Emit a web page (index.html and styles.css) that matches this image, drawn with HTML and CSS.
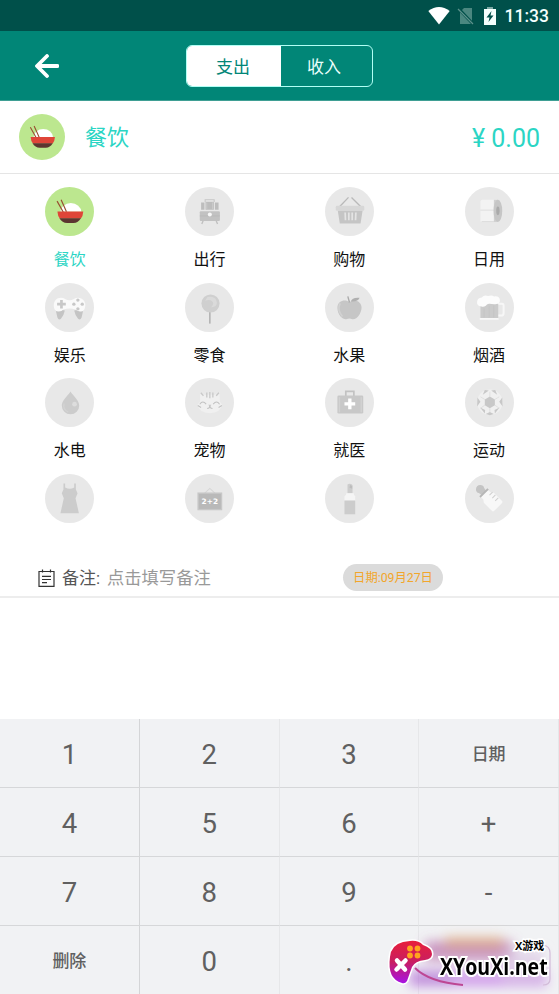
FILE: index.html
```html
<!DOCTYPE html>
<html lang="zh-CN">
<head>
<meta charset="utf-8">
<title>记账</title>
<link rel="stylesheet" href="styles.css">
</head>
<body>
<svg class="defs" aria-hidden="true">
  <symbol id="bowl" viewBox="0 0 146 146">
    <circle cx="73" cy="73" r="73" fill="#bce78f"/>
    <path d="M46 74a31 26 0 0 1 62 0z" fill="#fff"/>
    <path d="M36 42l19 34M48 38l16 36" stroke="#984f31" stroke-width="3.5" fill="none"/>
    <path d="M37 73h77q-1 14-7 21H44Q38 87 37 73z" fill="#df4538"/>
    <path d="M43 93h64q-8 14-22 14H66q-15 0-23-14z" fill="#5c3530"/>
  </symbol>
</svg>
<main class="screen">
  <div class="status">
    <svg class="wifi" viewBox="0 0 22 18"><path d="M.3 4Q11-4 21.7 4L11 17.5z" fill="#fff"/></svg>
    <svg class="sim" viewBox="0 0 18 18"><path d="M7 1h8v16H3V5z" fill="#4b8780"/><path d="M1 1l15 16" stroke="#00504a" stroke-width="3"/><path d="M1 2l15 15" stroke="#5c918b" stroke-width="1.3"/></svg>
    <svg class="battery" viewBox="0 0 12 18"><path d="M3.5 0h5v2H12v16H0V2h3.500z" fill="#f4fffd"/><path d="M3.500 0h5v2h-5z" fill="#7fa9a4"/><path d="M7.500 4L2.500 10.500h3L4.500 15l5-6.500h-3z" fill="#00504a"/></svg>
    <span class="clock">11:33</span>
  </div>
  <header class="header">
    <svg class="back" viewBox="0 0 24 24"><path d="M12 2L2 12l10 10M2.500 12h20" fill="none" stroke="#fff" stroke-width="3.800" stroke-linecap="round" stroke-linejoin="round"/></svg>
    <div class="tabs"><span class="tab active">支出</span><span class="tab">收入</span></div>
  </header>
  <section class="entry">
    <svg class="entry-icon"><use href="#bowl"/></svg>
    <span class="entry-name">餐饮</span>
    <span class="amount">¥ 0.00</span>
  </section>
  <section class="categories">
    <div class="cat selected"><svg><use href="#bowl"/></svg><span>餐饮</span></div>
    <div class="cat"><svg viewBox="0 0 146 146"><circle cx="73" cy="73" r="73" fill="#e8e8e8"/>
      <path d="M60 45v-7h27v7" fill="none" stroke="#c5c5c5" stroke-width="3"/><path d="M48 46h10v22H48zM61 44h25v24H61zM89 46h11v22H89z" fill="#bdbdbd"/><path d="M65 46v20M82 46v20" stroke="#d0d0d0" stroke-width="2"/><rect x="44" y="72" width="60" height="29" rx="3" fill="#c2c2c2"/><path d="M44 86h60" stroke="#b5b5b5" stroke-width="2"/><circle cx="74" cy="82" r="6" fill="#f7f7f7"/><path d="M54 101l-4 9M93 101l4 9" stroke="#c0c0c0" stroke-width="4"/></svg><span>出行</span></div>
    <div class="cat"><svg viewBox="0 0 146 146"><circle cx="73" cy="73" r="73" fill="#e8e8e8"/>
      <path d="M44 58l26-27M79 31l27 27" stroke="#b9b9b9" stroke-width="4"/><path d="M38 70h74l-6 39H44z" fill="#c5c5c5"/><rect x="32" y="56" width="85" height="15" rx="4" fill="#d7d7d7"/><path d="M60 76l1 23M71 76v23M81 76v23M92 76l-1 23" stroke="#e4e4e4" stroke-width="5"/></svg><span>购物</span></div>
    <div class="cat"><svg viewBox="0 0 146 146"><circle cx="73" cy="73" r="73" fill="#e8e8e8"/>
      <path d="M46 43q1-5 6-5h44v65H46z" fill="#f3f3f3"/><path d="M46 69h40M50 103h44" stroke="#dadada" stroke-width="2.500"/><path d="M86 38h12v66H86z" fill="#d0d0d0"/><ellipse cx="98" cy="71" rx="13" ry="33" fill="#c6c6c6"/><ellipse cx="98" cy="71" rx="5" ry="13" fill="#aaa"/></svg><span>日用</span></div>
    <div class="cat"><svg viewBox="0 0 146 146"><circle cx="73" cy="73" r="73" fill="#e8e8e8"/>
      <path d="M31 77l6 26q4 10 11 3 8-9 11-24zM115 77l-6 26q-4 10-11 3-8-9-11-24z" fill="#c4c4c4"/><path d="M60 48q13 7 26 0 10-7 22-2 13 7 12 22-1 19-16 17-9-1-13-6-18-6-36 0-5 6-14 6-15 0-15-18 0-14 11-21 13-5 23 2z" fill="#fafafa"/><path d="M49 51v25M36 63h26" stroke="#c8c8c8" stroke-width="8"/><g fill="#c8c8c8"><circle cx="98" cy="51" r="5"/><circle cx="86" cy="63" r="5"/><circle cx="111" cy="63" r="5"/><circle cx="98" cy="77" r="5"/></g></svg><span>娱乐</span></div>
    <div class="cat"><svg viewBox="0 0 146 146"><circle cx="73" cy="73" r="73" fill="#e8e8e8"/>
      <path d="M74 85v36" stroke="#b5b5b5" stroke-width="5"/><circle cx="76" cy="61" r="27" fill="#cfcfcf"/><path d="M67 42q26-5 28 17-1 14-17 13 11-11 2-18-7-6-20-1z" fill="#dadada"/></svg><span>零食</span></div>
    <div class="cat"><svg viewBox="0 0 146 146"><circle cx="73" cy="73" r="73" fill="#e8e8e8"/>
      <path d="M73 57C60 47 37 53 37 74c0 22 16 35 26 34 7-2 11-3 18 0 15 2 27-17 28-34 0-20-22-28-36-17z" fill="#c6c6c6"/><path d="M45 61Q35 80 52 100" stroke="#d2d2d2" stroke-width="5" fill="none"/><path d="M73 58l-5-18" stroke="#aaa" stroke-width="4"/><path d="M77 55q3-13 26-11-5 13-26 11z" fill="#b0b0b0"/></svg><span>水果</span></div>
    <div class="cat"><svg viewBox="0 0 146 146"><circle cx="73" cy="73" r="73" fill="#e8e8e8"/>
      <path d="M98 62h12q5 0 5 5v23q0 7-7 7H98" fill="none" stroke="#f7f7f7" stroke-width="6"/><path d="M46 62h53v43H46z" fill="#cbcbcb"/><path d="M57 76v27M72 68v35M86 67v36" stroke="#c5c5c5" stroke-width="3"/><path d="M49 70q-15-2-13-14 1-12 14-13 7-9 19-4 10-4 18 1 16-2 17 11 1 13-16 12-9 0-16-2-8 2-10 7-7 5-13 2z" fill="#fcfcfc"/><path d="M44 107h56" stroke="#fafafa" stroke-width="5"/></svg><span>烟酒</span></div>
    <div class="cat"><svg viewBox="0 0 146 146"><circle cx="73" cy="73" r="73" fill="#e8e8e8"/>
      <path d="M76 40c8 13 26 26 26 42a26 26 0 0 1-52 0c0-16 18-29 26-42z" fill="#ccc"/><path d="M57 76q-5 17 12 25" stroke="#d3d3d3" stroke-width="4" fill="none"/><circle cx="88" cy="78" r="7" fill="#ddd"/></svg><span>水电</span></div>
    <div class="cat"><svg viewBox="0 0 146 146"><circle cx="73" cy="73" r="73" fill="#e8e8e8"/>
      <path d="M45 43l17 8q12-4 24 0l17-8 1 28 7 9q-6 25-37 25T37 80l8-9z" fill="#f0f0f0"/><path d="M47 44l8 9M101 44l-8 9M65 43v15M74 42v18M83 43v15" stroke="#c9c9c9" stroke-width="4"/><path d="M44 78q9-13 19 0M84 78q10-13 19 0M38 82l10 6M110 82l-10 6M66 91q8 0 8-9 0 9 8 9" fill="none" stroke="#c2c2c2" stroke-width="3"/><path d="M69 80h10l-5 5z" fill="#c6c6c6"/></svg><span>宠物</span></div>
    <div class="cat"><svg viewBox="0 0 146 146"><circle cx="73" cy="73" r="73" fill="#e8e8e8"/>
      <path d="M62 54V40h24v14" fill="none" stroke="#c2c2c2" stroke-width="5"/><rect x="37" y="52" width="77" height="54" rx="4" fill="#c8c8c8"/><path d="M43 57v45M108 57v45" stroke="#d2d2d2" stroke-width="4"/><path d="M74 61v32M58 77h32" stroke="#fff" stroke-width="10"/></svg><span>就医</span></div>
    <div class="cat"><svg viewBox="0 0 146 146"><circle cx="73" cy="73" r="73" fill="#e8e8e8"/>
      <circle cx="74" cy="72" r="38" fill="#f0f0f0"/><path d="M74 55l15 9v17l-15 9-15-9V64zM59 36l12 1-18 13zM90 36l-12 1 18 13zM37 58l9 13-10 14zM111 58l-9 13 10 14zM45 88l15 7-1 11zM103 88l-15 7 1 11zM74 101l12 6-12 4-12-4z" fill="#c8c8c8"/><path d="M59 64L46 56M89 64l13-8M59 81l-13 9M89 81l13 9M74 55V41M74 90v12" stroke="#d8d8d8" stroke-width="2"/></svg><span>运动</span></div>
    <div class="cat"><svg viewBox="0 0 146 146"><circle cx="73" cy="73" r="73" fill="#e8e8e8"/>
      <path d="M55 28h5v12q14 8 27 0V28h5v18l5 11-6 15 10 45H46l10-45-6-15 5-11z" fill="#ccc"/></svg></div>
    <div class="cat"><svg viewBox="0 0 146 146"><circle cx="73" cy="73" r="73" fill="#e8e8e8"/>
      <path d="M58 58l16-15 16 15" fill="none" stroke="#d6d6d6" stroke-width="3"/><rect x="39" y="57" width="70" height="49" fill="#b9b9b9" stroke="#c7c7c7" stroke-width="4"/><text class="board" x="74" y="90" text-anchor="middle">2+2</text></svg></div>
    <div class="cat"><svg viewBox="0 0 146 146"><circle cx="73" cy="73" r="73" fill="#e8e8e8"/>
      <path d="M67 31q8-4 15 2v24H67z" fill="#ccc"/><path d="M75 33l6 3v8l-8-3z" fill="#bcbcbc"/><path d="M63 57h23v5l4 4v14H58V66l5-4z" fill="#f5f5f5"/><path d="M58 79h32v41H58z" fill="#ccc"/></svg></div>
    <div class="cat"><svg viewBox="0 0 146 146"><circle cx="73" cy="73" r="73" fill="#e8e8e8"/>
      <g transform="rotate(-45 73 73)"><path d="M64 25q9-8 18 0 7 7 2 14l-2 10H64l-2-10q-5-7 2-14z" fill="#c4c4c4"/><path d="M56 50h34" stroke="#b7b7b7" stroke-width="6"/><path d="M58 53h30v9l6 8v34q0 5-5 5H57q-5 0-5-5V70l6-8z" fill="#f8f8f8"/><path d="M80 66h13M80 78h13M80 90h13" stroke="#cfcfcf" stroke-width="3"/></g></svg></div>
  </section>
  <section class="note">
    <svg class="note-icon" viewBox="0 0 17 18"><path d="M1 2.500h15v14.800H1zM4.500.5v3M12.500.5v3M4 7.300h9M4 10.500h9M4 13.700h5" fill="none" stroke="#333" stroke-width="1.200"/></svg>
    <span class="note-label">备注:</span><span class="note-hint">点击填写备注</span>
    <span class="date">日期:09月27日</span>
  </section>
  <section class="keypad">
    <div class="key">1</div><div class="key">2</div><div class="key">3</div><div class="key word">日期</div>
    <div class="key">4</div><div class="key">5</div><div class="key">6</div><div class="key">+</div>
    <div class="key">7</div><div class="key">8</div><div class="key">9</div><div class="key">-</div>
    <div class="key word">删除</div><div class="key">0</div><div class="key">.</div><div class="key"></div>
  </section>
  <div class="watermark">
    <svg viewBox="0 0 180 84">
      <defs>
        <linearGradient id="pad" x1="0" y1="0" x2="0" y2="1"><stop offset="0" stop-color="#e8203a"/><stop offset=".5" stop-color="#c81e62"/><stop offset="1" stop-color="#a713e4"/></linearGradient>
        <filter id="soft" x="-30%" y="-50%" width="160%" height="200%"><feGaussianBlur stdDeviation="6"/></filter>
      </defs>
      <g filter="url(#soft)">
        <path d="M46 31h88v20H46z" fill="#b05a9e" opacity=".6"/><path d="M66 27h58v10H66z" fill="#e0a163" opacity=".6"/><path d="M30 60h138v17H30z" fill="#c070e4" opacity=".6"/><path d="M125 40h40v34h-40z" fill="#d8c3e3" opacity=".6"/><path d="M34 62h40v12H34z" fill="#8a5fae" opacity=".3"/>
      </g>
      <path d="M164 35q7 1 7 8v26q0 6-7 6" fill="none" stroke="#d3bcd9" stroke-width="1.200"/>
      <path d="M36 58q14 14 48 17" fill="none" stroke="#bd4794" stroke-width="2"/>
      <path d="M24 32l7-1q8-1 13 4 9 3 9 9 0 5-7 6-10 1-13 7l-5 14q-2 3-5 2Q8 69 11 47q1-12 13-15z" fill="url(#pad)" stroke="#fff" stroke-width="3" paint-order="stroke"/>
      <path d="M18 50.500l8 9M26.500 50.500L17.500 59.500" stroke="#fff" stroke-width="4.500" stroke-linecap="round"/>
      <g fill="#ffa51e"><circle cx="31" cy="38.500" r="2.900"/><circle cx="38.500" cy="38.500" r="2.900"/><circle cx="31" cy="45.500" r="2.900"/><circle cx="38.500" cy="45.500" r="2.900"/></g>
    </svg>
    <span class="brand-small">X游戏</span>
    <span class="brand">XYouXi.net</span>
  </div>
</main>
</body>
</html>
```
FILE: styles.css
```css
* { box-sizing: border-box; }
body { margin: 0; background: #fff; font-family: Roboto, "Noto Sans CJK SC", sans-serif; }
.defs { position: absolute; width: 0; height: 0; }
.screen { position: relative; width: 559px; height: 994px; overflow: hidden; display: flex; flex-direction: column; }
.status { height: 31px; flex: none; background: #00504a; display: flex; justify-content: flex-end; align-items: center; padding-right: 10px; }
.wifi { width: 22px; height: 18px; margin-right: 7px; }
.sim { width: 18px; height: 18px; margin-right: 9px; }
.battery { width: 12px; height: 18px; margin-right: 9px; }
.clock { color: #f4fffd; font-size: 17.5px; font-weight: 500; line-height: 20px; padding-top: 1px; }
.header { height: 70px; flex: none; background: #018677; border-bottom: 1px solid #3f9f94; display: flex; align-items: center; }
.back { width: 24px; height: 24px; margin-left: 35px; }
.tabs { display: flex; width: 187px; height: 42px; margin-left: 127px; border: 1.5px solid #b2fff5; border-radius: 6px; overflow: hidden; }
.tab { flex: 1; display: flex; align-items: center; justify-content: center; color: #eafffc; font-size: 17px; padding: 0 5px 1px 0; }
.tab.active { flex: 0 0 94px; padding: 0 2px 1px 0; background: #fff; color: #018677; }
.entry { height: 73px; flex: none; border-bottom: 1px solid #e5e5e5; display: flex; align-items: center; padding: 0 19px; color: #2bd5c4; }
.entry-icon { width: 46px; height: 46px; }
.entry-name { font-size: 22px; line-height: 30px; margin-left: 20px; padding-top: 2px; }
.amount { font-size: 25px; line-height: 30px; margin-left: auto; padding-top: 4px; }
.categories { height: 372px; flex: none; overflow: hidden; padding-top: 13px; display: grid; grid-template-columns: repeat(4, 1fr); grid-auto-rows: 95.7px; }
.cat { display: flex; flex-direction: column; align-items: center; font-size: 16px; line-height: 24px; color: #111; }
.cat svg { width: 49px; height: 49px; flex: none; margin-bottom: 12px; }
.selected { color: #2bd5c4; }
.board { font: 700 22px "DejaVu Sans", sans-serif; fill: #fff; }
.note { height: 52px; flex: none; border-bottom: 2px solid #ededed; display: flex; align-items: center; padding: 13px 0 0 38px; }
.note-icon { width: 17px; height: 18px; margin-right: 7px; }
.note-label { color: #555; font-size: 17px; line-height: 24px; width: 45px; padding-top: 1px; }
.note-hint { color: #999; font-size: 17.3px; line-height: 24px; width: 105px; padding-top: 1px; white-space: nowrap; }
.date { width: 100px; height: 27px; margin-left: 131px; border-radius: 14px; background: #dbdbdb; color: #f2a62b; font-size: 12.3px; line-height: 29px; text-align: center; white-space: nowrap; }
.keypad { height: 275px; flex: none; margin-top: auto; background: #f1f2f4; display: grid; grid-template-columns: repeat(4, 1fr); grid-template-rows: repeat(4, 68.9px); }
.key { border-right: 1px solid #e6e7e9; border-bottom: 1px solid #d6d7d9; color: #606060; font-size: 27.5px; display: flex; align-items: center; justify-content: center; padding-top: 3px; }
.key:nth-child(4n + 1) { border-right-color: #d4d5d7; }
.key.word { font-size: 17px; font-weight: 500; padding-top: 0; padding-bottom: 1px; }
.watermark { position: absolute; left: 379px; top: 910px; width: 180px; height: 84px; }
.watermark svg { display: block; width: 180px; height: 84px; }
.brand, .brand-small { position: absolute; font-family: "Open Sans", "Noto Sans CJK SC", sans-serif; font-weight: 700; color: #000; -webkit-text-stroke: 4px #fff; paint-order: stroke fill; white-space: nowrap; transform-origin: 0 0; }
.brand { left: 61px; top: 46px; font-size: 23px; line-height: 20px; transform: scaleX(.85); }
.brand-small { left: 136px; top: 29px; font-size: 11px; line-height: 13px; -webkit-text-stroke-width: 3px; }
```
